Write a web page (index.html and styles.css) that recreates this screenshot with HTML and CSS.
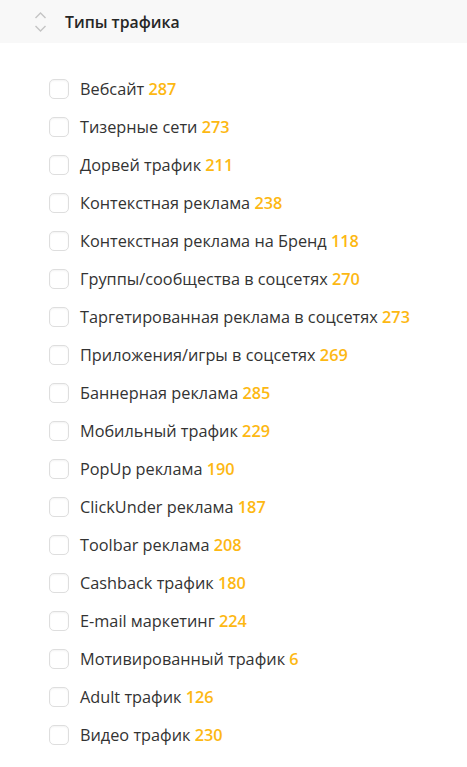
FILE: index.html
```html
<!DOCTYPE html>
<html lang="ru">
<head>
<meta charset="utf-8">
<link rel="stylesheet" href="styles.css">
</head>
<body>
<div class="panel">
  <div class="header">
    <svg class="sort" width="13" height="24" viewBox="0 0 13 24">
      <path d="M1.5 8 L6.5 3 L11.5 8" fill="none" stroke="#c4c4c4" stroke-width="1.4"/>
      <path d="M1.5 16 L6.5 21 L11.5 16" fill="none" stroke="#c4c4c4" stroke-width="1.4"/>
    </svg>
    <span class="title">Типы трафика</span>
  </div>
  <ul class="list">
    <li class="item"><span class="box"></span><span class="label">Вебсайт <b class="count">287</b></span></li>
    <li class="item"><span class="box"></span><span class="label">Тизерные сети <b class="count">273</b></span></li>
    <li class="item"><span class="box"></span><span class="label">Дорвей трафик <b class="count">211</b></span></li>
    <li class="item"><span class="box"></span><span class="label">Контекстная реклама <b class="count">238</b></span></li>
    <li class="item"><span class="box"></span><span class="label">Контекстная реклама на Бренд <b class="count">118</b></span></li>
    <li class="item"><span class="box"></span><span class="label">Группы/сообщества в соцсетях <b class="count">270</b></span></li>
    <li class="item"><span class="box"></span><span class="label">Таргетированная реклама в соцсетях <b class="count">273</b></span></li>
    <li class="item"><span class="box"></span><span class="label">Приложения/игры в соцсетях <b class="count">269</b></span></li>
    <li class="item"><span class="box"></span><span class="label">Баннерная реклама <b class="count">285</b></span></li>
    <li class="item"><span class="box"></span><span class="label">Мобильный трафик <b class="count">229</b></span></li>
    <li class="item"><span class="box"></span><span class="label">PopUp реклама <b class="count">190</b></span></li>
    <li class="item"><span class="box"></span><span class="label">ClickUnder реклама <b class="count">187</b></span></li>
    <li class="item"><span class="box"></span><span class="label">Toolbar реклама <b class="count">208</b></span></li>
    <li class="item"><span class="box"></span><span class="label">Cashback трафик <b class="count">180</b></span></li>
    <li class="item"><span class="box"></span><span class="label">E-mail маркетинг <b class="count">224</b></span></li>
    <li class="item"><span class="box"></span><span class="label">Мотивированный трафик <b class="count">6</b></span></li>
    <li class="item"><span class="box"></span><span class="label">Adult трафик <b class="count">126</b></span></li>
    <li class="item"><span class="box"></span><span class="label">Видео трафик <b class="count">230</b></span></li>
  </ul>
</div>
</body>
</html>
```
FILE: styles.css
```css
html, body {
  margin: 0;
  padding: 0;
  background: #ffffff;
}
body {
  font-family: "Open Sans", "Noto Sans", sans-serif;
  color: #333333;
}
.panel {
  width: 467px;
}
.header {
  height: 43px;
  background: #f8f8f8;
  display: flex;
  align-items: center;
  padding-left: 34px;
  box-sizing: border-box;
}
.sort {
  display: block;
  margin-right: 18px;
}
.title {
  font-size: 15.8px;
  font-weight: 600;
  color: #262626;
}
.list {
  list-style: none;
  margin: 0;
  padding: 27px 0 0 49px;
}
.item {
  height: 38px;
  display: flex;
  align-items: center;
}
.box {
  width: 18px;
  height: 18px;
  border: 1px solid #dedede;
  border-radius: 5px;
  box-shadow: inset 0 1px 2px rgba(0,0,0,0.05);
  margin-right: 11px;
  flex: none;
}
.label {
  font-size: 16.3px;
  color: #333333;
  white-space: nowrap;
}
.count {
  font-weight: 600;
  color: #fdb813;
}
```
